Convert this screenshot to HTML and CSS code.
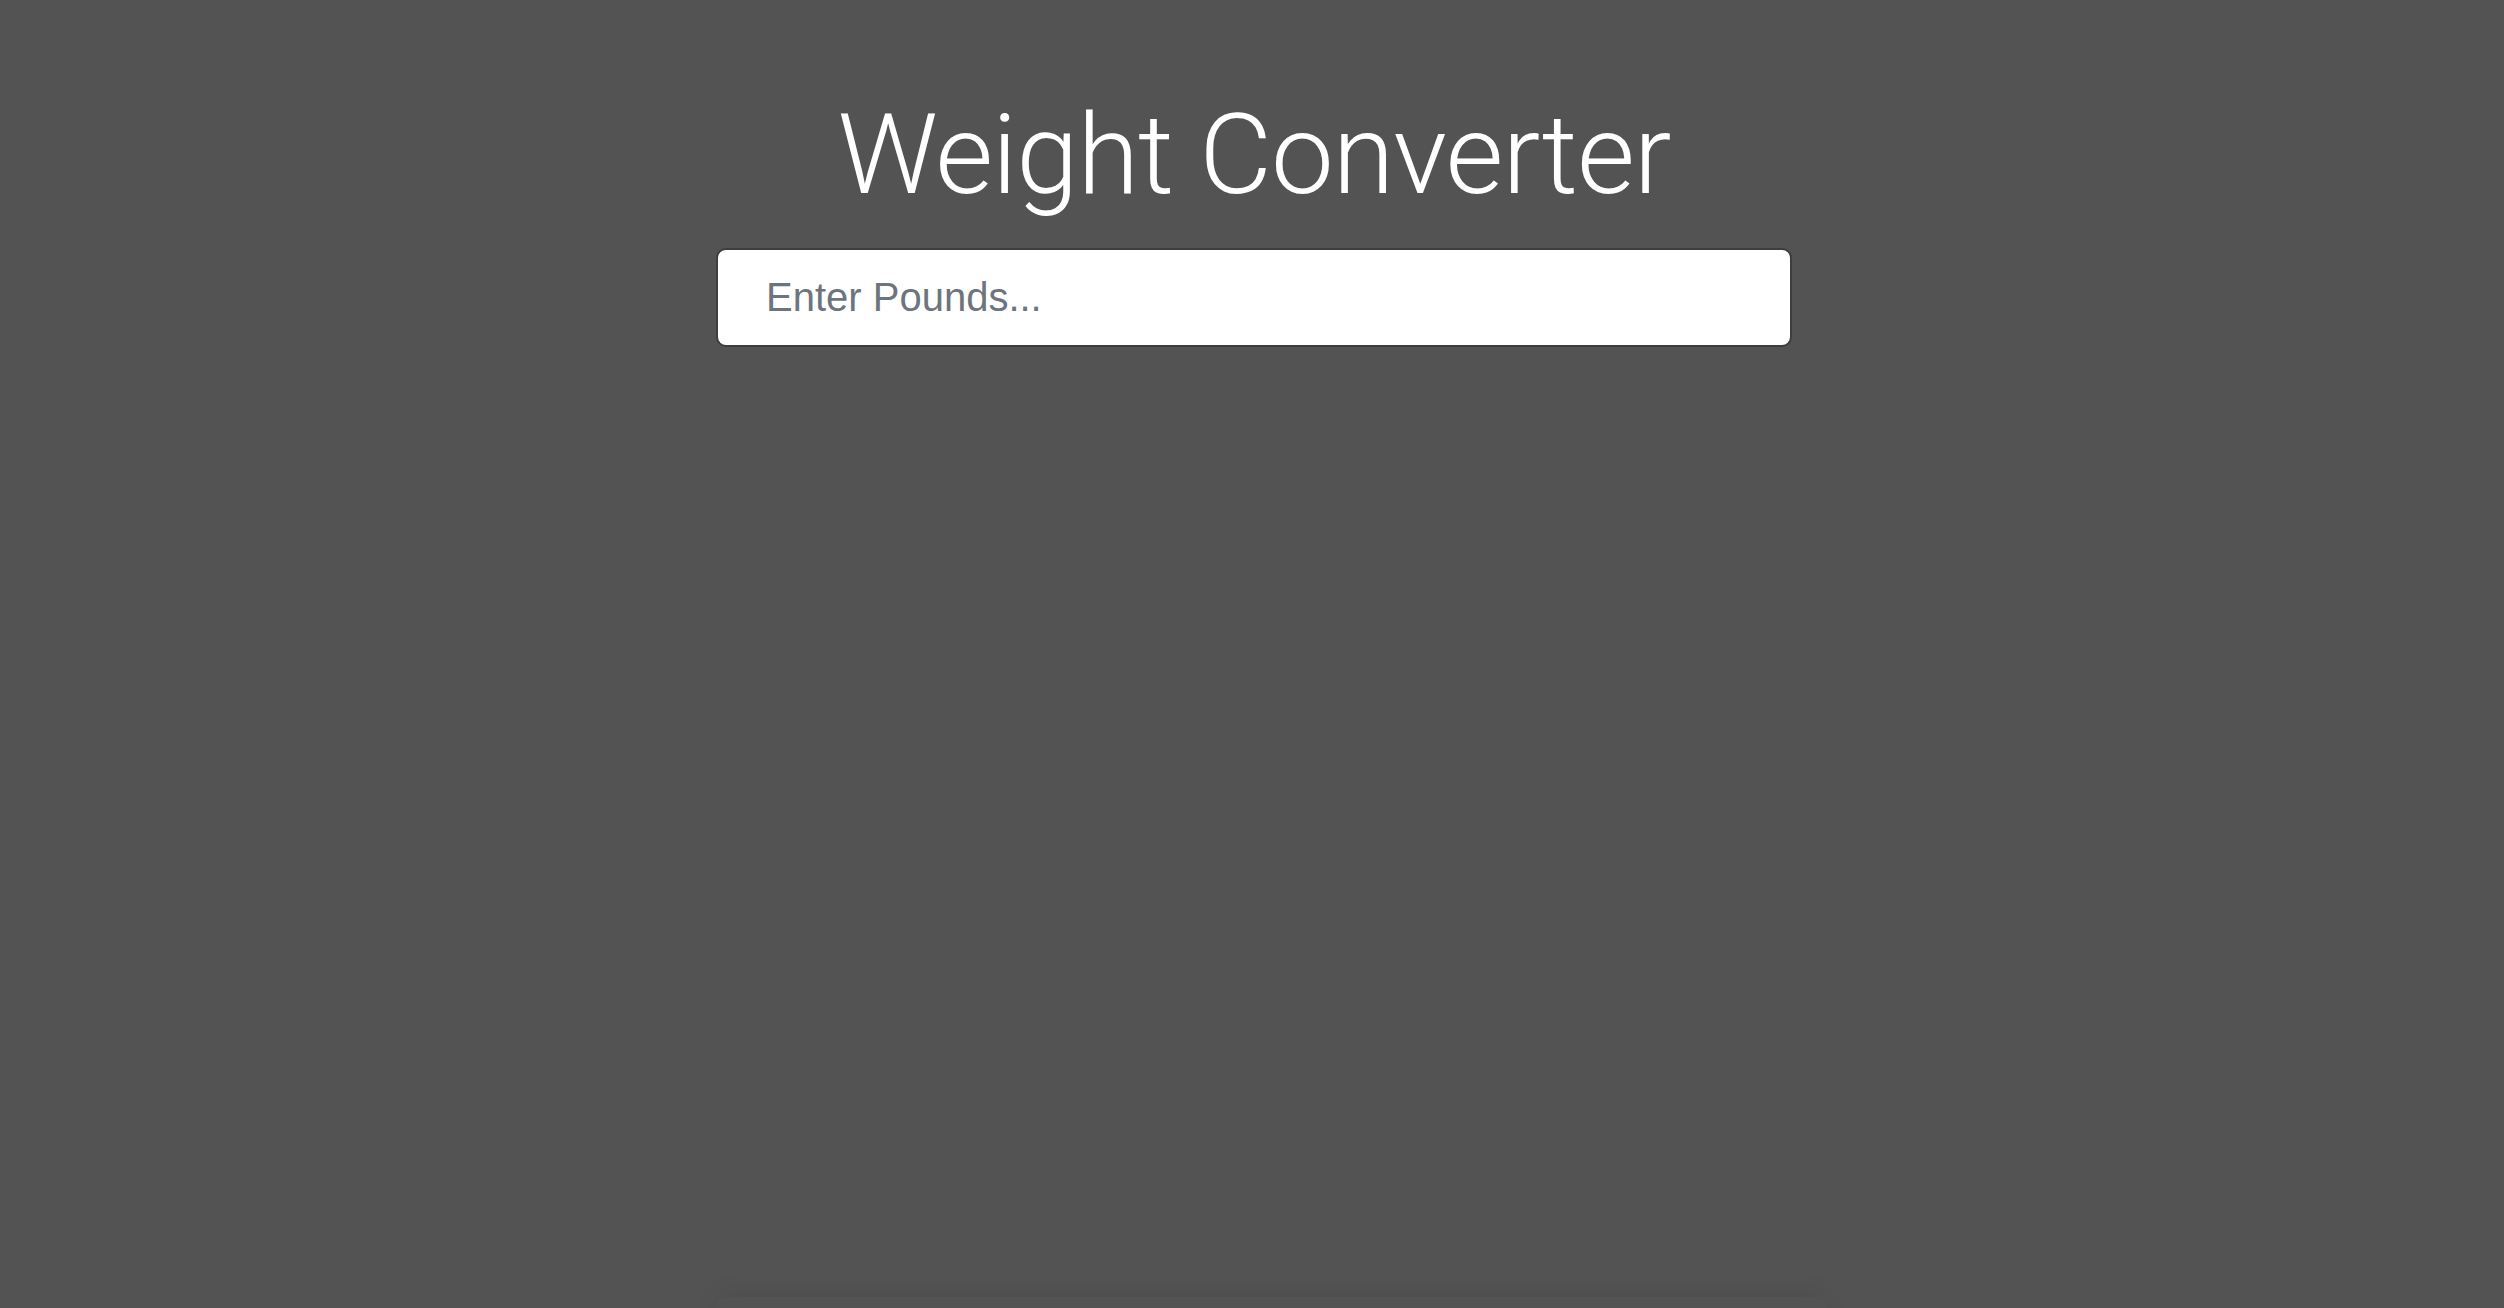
FILE: index.html
```html
<!DOCTYPE html>
<html lang="en">
<head>
<meta charset="utf-8">
<title>Weight Converter</title>
<link rel="stylesheet" href="styles.css">
</head>
<body>
  <main class="container">
    <h1 class="title">Weight Converter</h1>
    <form class="form">
      <input class="pounds" type="number" placeholder="Enter Pounds...">
    </form>
    <div class="output-card"></div>
  </main>
</body>
</html>
```
FILE: styles.css
```css
html, body {
  margin: 0;
  padding: 0;
  height: 100%;
  overflow: hidden;
}
body {
  background: #535353;
  font-family: "Liberation Sans", Arial, sans-serif;
}
.container {
  width: 1076px;
  margin: 0 auto;
  padding-left: 4px;
  display: flex;
  flex-direction: column;
  align-items: stretch;
  padding-top: 88px;
}
.title {
  margin: 0 0 26px;
  text-align: center;
  color: #fff;
  font-family: Roboto, "Liberation Sans", sans-serif;
  font-weight: 300;
  font-size: 112px;
  line-height: 134px;
  letter-spacing: -1px;
}
.form {
  margin: 0;
}
.pounds {
  box-sizing: border-box;
  width: 100%;
  height: 99px;
  padding: 0 48px;
  border: 2px solid #3e3e3e;
  border-radius: 10px;
  background: #fff;
  font-family: "Liberation Sans", Arial, sans-serif;
  font-size: 40px;
  color: #495057;
  outline: none;
}
.pounds::placeholder {
  color: #6c757d;
}
.output-card {
  margin: 950px auto 0;
  width: 1110px;
  height: 300px;
  border-radius: 10px;
  box-shadow: 0 -6px 24px rgba(0,0,0,0.06);
}
```
